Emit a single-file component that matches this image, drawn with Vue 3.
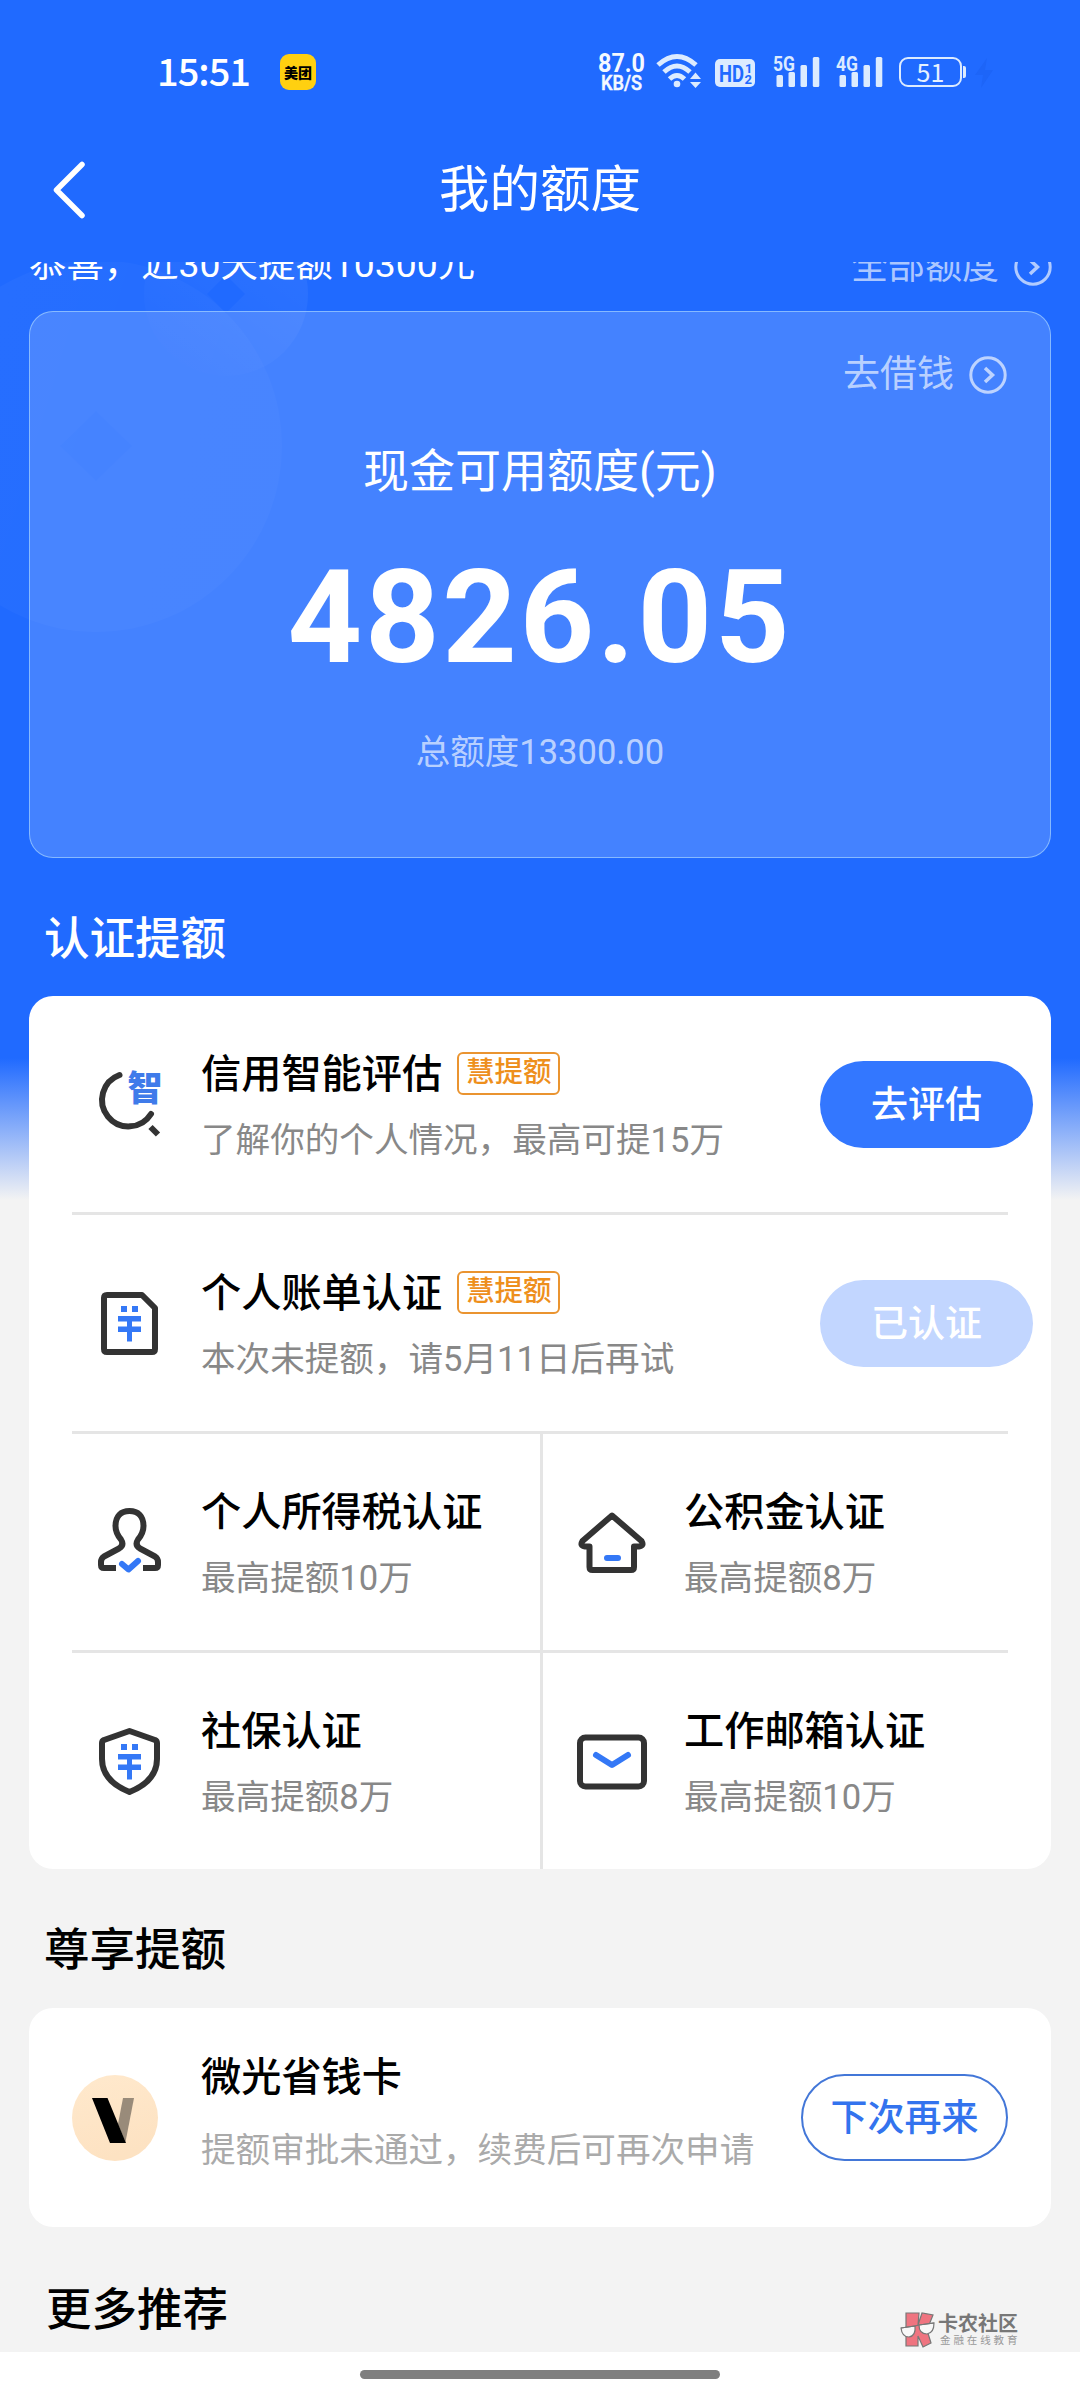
<script setup>
const wideRows = [
  { icon: 'assess', title: '信用智能评估', sub: '了解你的个人情况，最高可提15万', tag: '慧提额', action: '去评估', done: false },
  { icon: 'bill', title: '个人账单认证', sub: '本次未提额，请5月11日后再试', tag: '慧提额', action: '已认证', done: true },
]
const gridRows = [
  [
    { icon: 'person', title: '个人所得税认证', sub: '最高提额10万' },
    { icon: 'house', title: '公积金认证', sub: '最高提额8万' },
  ],
  [
    { icon: 'shield', title: '社保认证', sub: '最高提额8万' },
    { icon: 'mail', title: '工作邮箱认证', sub: '最高提额10万' },
  ],
]
const signals = ['5G', '4G']
const cells = gridRows.flat()
</script>

<template>
  <div class="screen">
    <header class="status">
      <span class="time">15:51</span>
      <span class="app-badge">美团</span>
      <span class="speed">
        <svg width="50" height="40" viewBox="0 0 50 40" fill="#f4f9ff" font-family="Roboto, sans-serif" font-weight="700">
          <text x="0" y="20" font-size="25" textLength="47" lengthAdjust="spacingAndGlyphs">87.0</text>
          <text x="3" y="38" font-size="20" textLength="41" lengthAdjust="spacingAndGlyphs" font-weight="500" stroke="#f4f9ff" stroke-width="0.500">KB/S</text>
        </svg>
      </span>
      <svg class="wifi" width="46" height="38" viewBox="0 0 46 38" fill="none" stroke="#dcebff" stroke-width="5">
        <path d="M2 13 Q21 -4 40 13" />
        <path d="M8 20 Q21 8 34 20" />
        <path d="M13.5 27 Q21 20 28.500 27" />
        <circle cx="21" cy="32" r="3.300" fill="#dcebff" stroke="none" />
        <path d="M34 27 L39.500 20.500 L45 27 Z M34 30 L39.500 36 L45 30 Z" fill="#dcebff" stroke="none" />
      </svg>
      <svg class="hd" width="40" height="28" viewBox="0 0 40 28" fill="#206aff" font-family="Roboto, sans-serif" font-weight="700">
        <rect width="40" height="28" rx="5" fill="#dcebff" />
        <text x="4" y="22.500" font-size="23" textLength="25" lengthAdjust="spacingAndGlyphs">HD</text>
        <text x="30" y="13.500" font-size="13">1</text>
        <text x="29.500" y="25" font-size="13">2</text>
      </svg>
      <svg v-for="s in signals" :key="s" class="signal" width="48" height="34" viewBox="0 0 48 34" fill="#dcebff">
        <text x="0" y="16.500" font-family="Roboto, sans-serif" font-weight="700" font-size="21" textLength="22" lengthAdjust="spacingAndGlyphs">{{ s }}</text>
        <rect x="3.500" y="21" width="6.500" height="12" rx="1.500" />
        <rect x="15.500" y="18" width="6.500" height="15" rx="1.500" />
        <rect x="27.500" y="11" width="6.500" height="22" rx="1.500" />
        <rect x="39.800" y="3" width="6.500" height="30" rx="1.500" />
      </svg>
      <span class="battery">51</span>
      <span class="battery-cap"></span>
      <svg class="bolt" width="20" height="32" viewBox="0 0 20 32"><path d="M13 1 L1 18 H9 L7 31 L19 13 H11 Z" fill="#1d65f8" /></svg>
    </header>

    <nav class="nav">
      <svg class="back" width="36" height="60" viewBox="0 0 36 60" fill="none" stroke="#fff" stroke-width="5.500" stroke-linecap="round" stroke-linejoin="round"><path d="M31 4.500 L5.500 30 L31 55.500" /></svg>
      <h1>我的额度</h1>
    </nav>

    <main class="scroll">
      <svg class="decor" width="320" height="380" viewBox="0 0 320 380">
        <defs>
          <linearGradient id="glow" x1="0" y1="0" x2="1" y2="0.300">
            <stop offset="0" stop-color="#fff" stop-opacity="0.030" />
            <stop offset="1" stop-color="#fff" stop-opacity="0.018" />
          </linearGradient>
          <linearGradient id="glow2" x1="1" y1="0" x2="0.300" y2="1">
            <stop offset="0" stop-color="#fff" stop-opacity="0.070" />
            <stop offset="1" stop-color="#fff" stop-opacity="0.005" />
          </linearGradient>
        </defs>
        <circle cx="96" cy="184" r="186" fill="url(#glow)" />
        <circle cx="226" cy="32" r="82" fill="url(#glow2)" />
        <path d="M226 13 L245 32 L226 51 L207 32 Z" fill="#206aff" />
        <path d="M96 149 L132 184 L96 219 L60 184 Z" fill="#206aff" fill-opacity="0.600" />
      </svg>

      <div class="summary">
        <span>恭喜，近30天提额10300元</span>
        <span class="link all">全部额度
          <svg width="38" height="38" viewBox="0 0 38 38" fill="none" stroke="currentColor" stroke-width="3"><circle cx="19" cy="19" r="17.200" /><path d="M16 12 L23.500 19 L16 26" stroke-width="3.500" /></svg>
        </span>
      </div>

      <section class="quota">
        <span class="link borrow">去借钱
          <svg width="38" height="38" viewBox="0 0 38 38" fill="none" stroke="currentColor" stroke-width="3"><circle cx="19" cy="19" r="17.200" /><path d="M16 12 L23.500 19 L16 26" stroke-width="3.500" /></svg>
        </span>
        <div class="quota-title">现金可用额度(元)</div>
        <div class="amount">4826.05</div>
        <div class="total">总额度13300.00</div>
      </section>

      <h2 class="light">认证提额</h2>
      <section class="card">
        <div v-for="r in wideRows" :key="r.title" class="row">
          <svg v-if="r.icon === 'assess'" class="icon" viewBox="0 0 70 70">
            <path d="M25.500 6 A26.500 26.500 0 1 0 57 45" class="dark" />
            <path d="M56.500 58 L64 65.500" class="dark butt" />
            <text x="33.500" y="32" font-family="Noto Sans CJK SC, sans-serif" font-weight="900" font-size="35" fill="#3f7bea">智</text>
          </svg>
          <svg v-else class="icon" viewBox="0 0 70 70">
            <path d="M13 7 H48 L61 20 V61 Q61 64 58 64 H13 Q10 64 10 61 V10 Q10 7 13 7 Z" class="dark" />
            <path d="M27 18 h6 v6 h-6z M38 18 h6 v6 h-6z M24 28 h23 v5.500 h-9 v5 h9 v5.500 h-9 v9.500 h-5 v-9.500 h-9 v-5.500 h9 v-5 h-9z" fill="#3478f6" />
          </svg>
          <div class="text">
            <div class="title">{{ r.title }}<span class="tag">{{ r.tag }}</span></div>
            <div class="sub">{{ r.sub }}</div>
          </div>
          <button class="pill" :class="{ done: r.done }">{{ r.action }}</button>
        </div>
        <div class="grid">
          <div v-for="(c, i) in cells" :key="c.title" class="cell" :class="{ left: i % 2 === 0, top: i < 2 }">
            <svg v-if="c.icon === 'person'" class="icon" viewBox="0 0 70 70">
              <path d="M22 61 H10 Q7 61 7 58 V55 Q7 51.500 10 49.500 L25 41.500 Q30.500 38 27 32.500 Q21.500 26 21.500 19 C21.500 9 27 4 35.500 4 C44 4 49.500 9 49.500 19 Q49.500 26 44 32.500 Q40.500 38 46 41.500 L61 49.500 Q64 51.500 64 55 V58 Q64 61 61 61 H49" class="dark butt" />
              <path d="M28 57 L34.500 62.500 L44 54" class="blue" />
            </svg>
            <svg v-else-if="c.icon === 'house'" class="icon" viewBox="0 0 70 70">
              <path d="M35 8.500 L5.500 34 Q2.500 39 8 39.500 H12.500 V60 Q12.500 63 15.500 63 H54 Q57 63 57 60 V39.500 H62 Q67.500 39 64.500 34 Z" class="dark" />
              <path d="M30 51 H41" class="blue" />
            </svg>
            <svg v-else-if="c.icon === 'shield'" class="icon" viewBox="0 0 70 70">
              <path d="M35.500 5 L61 14 Q63 15 63 17 V33 Q63 55 35.500 66 Q8 55 8 33 V17 Q8 15 10 14 Z" class="dark" />
              <path d="M27 18 h6 v6 h-6z M38 18 h6 v6 h-6z M24 28 h23 v5.500 h-9 v5 h9 v5.500 h-9 v9.500 h-5 v-9.500 h-9 v-5.500 h9 v-5 h-9z" fill="#3478f6" />
            </svg>
            <svg v-else class="icon" viewBox="0 0 70 70">
              <rect x="3" y="11.500" width="64" height="49" rx="5.500" class="dark" />
              <path d="M19 29 L35 39 L51 29" class="blue" />
            </svg>
            <div class="text">
              <div class="title">{{ c.title }}</div>
              <div class="sub">{{ c.sub }}</div>
            </div>
          </div>
        </div>
      </section>

      <h2>尊享提额</h2>
      <section class="card vip">
        <svg class="v-logo" width="86" height="86" viewBox="0 0 86 86">
          <defs><linearGradient id="gold" x1="0" y1="0" x2="0.300" y2="1"><stop offset="0" stop-color="#ffe9cd" /><stop offset="1" stop-color="#fde2c2" /></linearGradient></defs>
          <circle cx="43" cy="43" r="43" fill="url(#gold)" />
          <path d="M51 23 H62 L53.500 67 L46 49 Z" fill="#998b7a" />
          <path d="M20 23 H35.500 L54 68 H38 Z" fill="#000" />
        </svg>
        <div class="text">
          <div class="title">微光省钱卡</div>
          <div class="sub">提额审批未通过，续费后可再次申请</div>
        </div>
        <button class="pill outline">下次再来</button>
      </section>

      <h2 class="more">更多推荐</h2>

      <div class="watermark">
        <svg width="36" height="38" viewBox="0 0 36 38" stroke="#777" stroke-width="1.200">
          <path d="M6 2 H19 L18 14 L22 2 L33 4 L27 19 L31 32 L23 36 L18 25 V35 H6 Z" fill="#ef7480" />
          <path d="M1 17 L15 15 Q16 25 9 26 Q2 26 1 17 Z M19 14 L34 12 Q34 22 27 23 Q19 23 19 14 Z" fill="#f8f8f8" />
          <path d="M1 17 L15 15 L19 14 L34 12" fill="none" />
        </svg>
        <div><b>卡农社区</b><i>金融在线教育</i></div>
      </div>
    </main>

    <footer class="home"><span></span></footer>
  </div>
</template>

<style>
body { margin: 0; }
</style>

<style scoped>
.screen {
  width: 1080px;
  height: 2400px;
  overflow: hidden;
  display: flex;
  flex-direction: column;
  background: linear-gradient(#206aff 0, #206aff 1058px, #f3f3f3 1200px);
  font-family: Roboto, "Noto Sans CJK SC", sans-serif;
  color: #000;
}
i { font-style: normal; }
.status {
  height: 92px;
  padding: 52px 0 0 157px;
  box-sizing: border-box;
  display: flex;
  align-items: flex-start;
  color: #fff;
}
.time {
  width: 123px;
  margin-top: -2px;
  font: 500 38px/40px "Noto Sans CJK SC", sans-serif;
  letter-spacing: -1px;
}
.app-badge {
  width: 36px;
  height: 36px;
  margin: 2px 282px 0 0;
  border-radius: 9px;
  background: #ffd010;
  color: #000;
  font: 900 14px/36px "Noto Sans CJK SC", sans-serif;
  text-align: center;
  white-space: nowrap;
}
.speed { width: 58px; flex: none; }
.speed svg { display: block; }
.wifi { margin-right: 13px; flex: none; }
.hd { margin: 7px 18px 0 0; flex: none; }
.signal { margin: 2px 15px 0 0; flex: none; }
.battery {
  width: 63px;
  height: 30px;
  margin-top: 5px;
  box-sizing: border-box;
  border: 2px solid #dcebff;
  border-radius: 9px;
  color: #e6f1ff;
  font: 400 25px/25px "Noto Sans CJK SC", sans-serif;
  text-align: center;
}
.battery-cap { width: 3px; height: 12px; margin: 14px 8px 0 1px; background: #dcebff; border-radius: 0 2px 2px 0; }
.bolt { margin-top: 5px; }
.nav {
  height: 170px;
  flex: none;
  display: grid;
  grid-template-columns: 51px 1fr 51px;
  color: #fff;
}
.back { margin-top: 68px; margin-left: 51px; }
h1 {
  margin: 63px 0 0;
  text-align: center;
  font-size: 50.500px;
  line-height: 70px;
  font-weight: 400;
}
.scroll {
  position: relative;
  height: 2090px;
  flex: none;
  overflow: hidden;
}
.decor { position: absolute; left: 0; top: 0; }
.summary {
  position: relative;
  height: 52px;
  margin: -24px 28px 21px 29px;
  display: flex;
  justify-content: space-between;
  color: #fff;
  font-size: 37.400px;
  line-height: 52px;
}
.link { display: flex; align-items: center; gap: 15px; color: rgba(255, 255, 255, 0.650); font-size: 37px; line-height: 52px; }
.all { height: 57px; }
.quota {
  position: relative;
  height: 547px;
  margin: 0 29px;
  box-sizing: border-box;
  border: 1px solid rgba(170, 215, 255, 0.650);
  border-radius: 24px;
  background: rgba(255, 255, 255, 0.165);
  color: #fff;
  text-align: center;
}
.borrow { justify-content: flex-end; padding: 37px 43px 0 0; }
.quota-title { margin-top: 38px; font-size: 46px; line-height: 64px; }
.amount { margin-top: 40px; font-size: 130px; line-height: 150px; font-weight: 700; letter-spacing: 2.800px; }
.total { margin-top: 34px; font-size: 34.500px; line-height: 50px; color: rgba(255, 255, 255, 0.650); }
h2 {
  margin: 0 0 0 44px;
  height: 139px;
  line-height: 163px;
  font-size: 45.500px;
  font-weight: 500;
}
h2.light { height: 138px; color: #fff; }
.card {
  margin: 0 29px;
  border-radius: 24px;
  background: #fff;
  overflow: hidden;
}
.row {
  height: 216px;
  margin: 0 43px;
  padding-left: 22px;
  border-bottom: 3px solid #e5e5e5;
  display: flex;
  align-items: center;
}
.icon { width: 70px; height: 70px; margin-right: 37px; flex: none; }
.dark { fill: none; stroke: #333; stroke-width: 6; stroke-linecap: round; stroke-linejoin: round; }
.butt { stroke-linecap: butt; }
.blue { fill: none; stroke: #3478f6; stroke-width: 6; stroke-linecap: round; stroke-linejoin: round; }
.text { flex: 1; min-width: 0; white-space: nowrap; }
.title { height: 60px; display: flex; align-items: center; font-size: 40.200px; line-height: 60px; font-weight: 500; padding-top: 2px; box-sizing: border-box; }
.tag {
  width: 103px;
  height: 43px;
  margin: -3px 0 0 15px;
  box-sizing: border-box;
  border: 2px solid #ea9430;
  border-radius: 6px;
  color: #ee8f1c;
  font-size: 28.500px;
  line-height: 38px;
  font-weight: 500;
  text-align: center;
}
.sub { margin-top: 12px; font-size: 34.600px; line-height: 48px; color: #888; }
.pill {
  width: 213px;
  height: 87px;
  margin-right: -25px;
  padding: 2px 0 0;
  flex: none;
  border: 0;
  border-radius: 44px;
  background: #3377ff;
  color: #fff;
  font: 500 37px/85px Roboto, "Noto Sans CJK SC", sans-serif;
}
.pill.done { background: #c2d6ff; }
.pill.outline {
  width: 207px;
  margin: 0;
  border: 2px solid #4377d8;
  background: #fff;
  color: #3373ee;
  line-height: 81px;
}
.grid { display: grid; grid-template-columns: 471px 465px; margin: 0 43px; }
.cell { height: 216px; padding-left: 34px; display: flex; align-items: center; }
.cell.left { padding-left: 22px; border-right: 3px solid #e5e5e5; }
.cell.top { border-bottom: 3px solid #e5e5e5; }
.vip { height: 219px; padding: 0 43px; display: flex; align-items: center; }
.v-logo { margin-right: 43px; flex: none; }
.vip .text { padding-bottom: 14px; }
.vip .sub { margin-top: 19px; color: #aaa; }
h2.more { margin-left: 46px; height: 125px; line-height: 167px; }
.watermark {
  position: absolute;
  left: 900px;
  top: 2049px;
  display: flex;
  gap: 2px;
  white-space: nowrap;
}
.watermark b { display: block; margin-top: 2px; font: 700 20px/20px "Noto Sans CJK SC", sans-serif; color: #777; }
.watermark i { display: block; padding: 2px 0 0 2px; font-size: 10.500px; line-height: 11px; letter-spacing: 2.900px; color: #999; }
.home { flex: 1; background: #fff; display: flex; justify-content: center; }
.home span { width: 360px; height: 9px; margin-top: 18px; border-radius: 5px; background: #7f7f7f; }
</style>
